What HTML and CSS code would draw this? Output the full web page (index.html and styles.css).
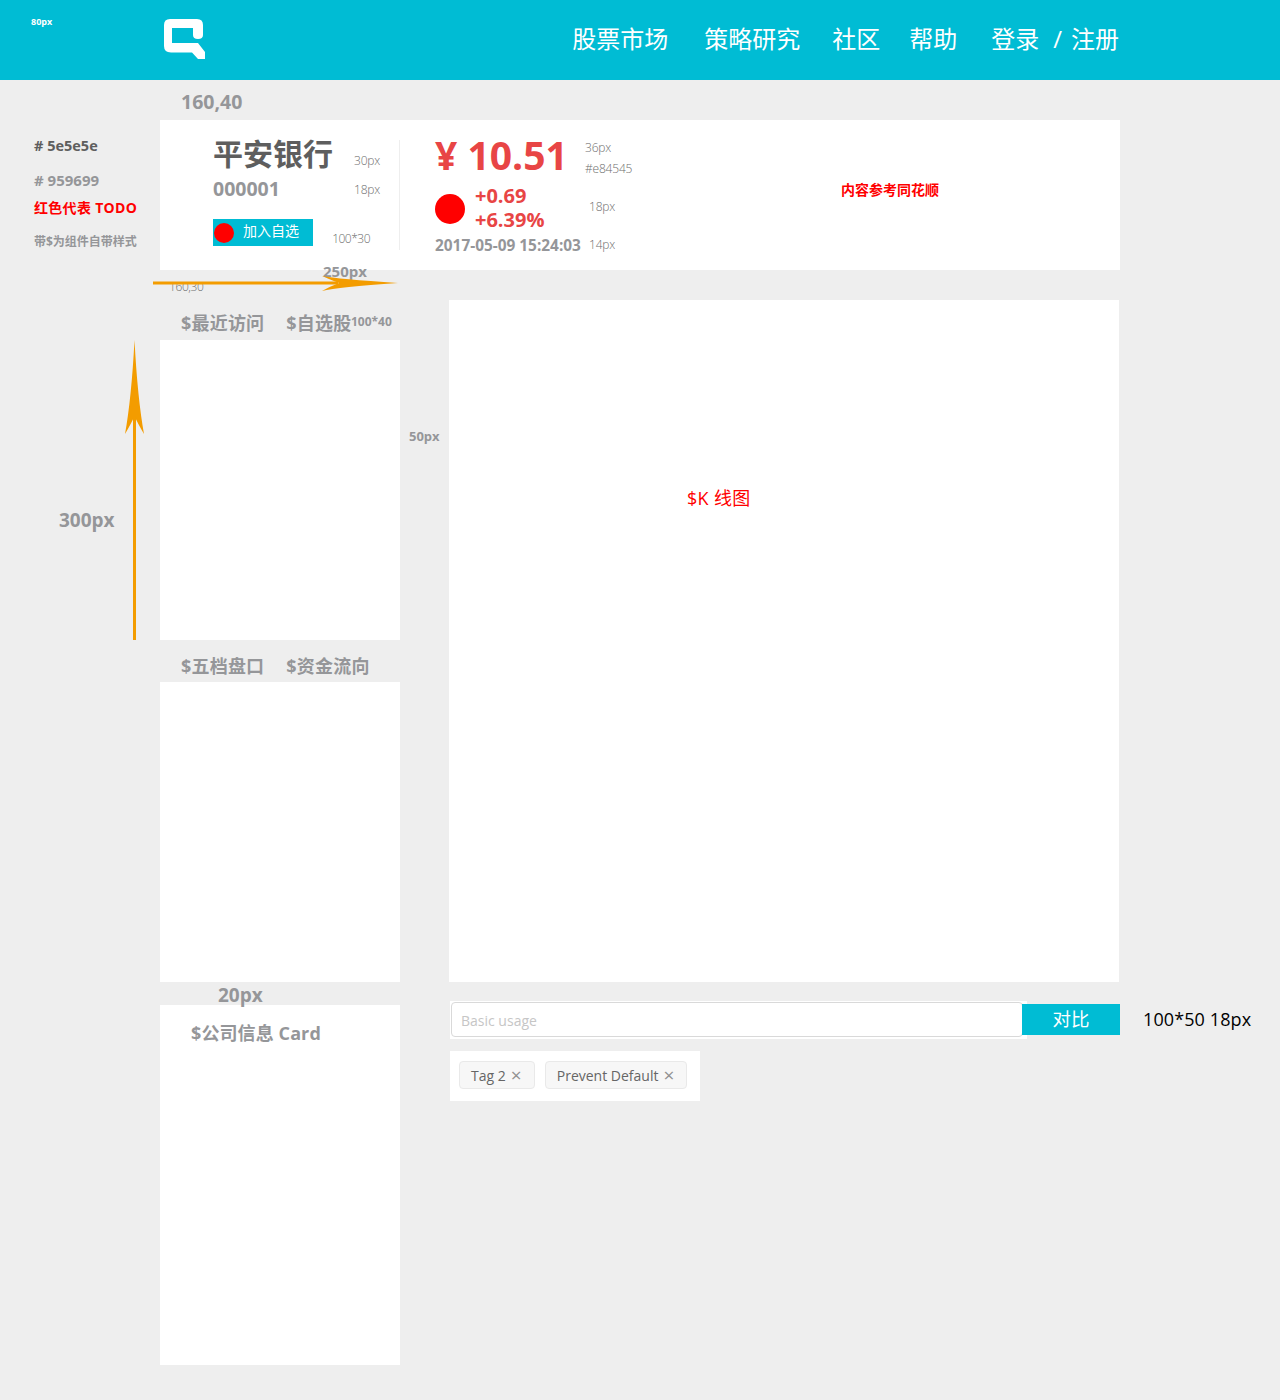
FILE: index.html
```html
<!DOCTYPE html>
<html>
<head lang="zh-CN">
    <meta charset="UTF-8">
    <title>股票市场</title>
    <link rel="stylesheet" href="styles.css">
</head>
<body>
    <div id="page">
        <div id="header">
            <svg id="logo" viewBox="0 0 42 41" width="42" height="41">
                <path d="M6 0 H33 Q39 0 39 6 V16 Q39 20 34 20 Q29 20 29 16 V9 H8 V24 H34 L41 33 V40 H34 L28 33.500 H7 Q0 33.500 0 27 V6 Q0 0 6 0 Z" fill="#fff"/>
            </svg>
            <ul id="nav">
                <li class="nav-market">股票市场</li>
                <li class="nav-research">策略研究</li>
                <li class="nav-community">社区</li>
                <li class="nav-help">帮助</li>
                <li class="nav-login">登录</li>
                <li class="nav-slash">/</li>
                <li class="nav-register">注册</li>
            </ul>
        </div>

        <div id="main">
            <div class="coord">160,40</div>
            <div id="summary">
                <div id="stock">
                    <div class="stock-row stock-title">
                        <h1>平安银行</h1>
                        <span class="hint">30px</span>
                    </div>
                    <div class="stock-row stock-code">
                        <b>000001</b>
                        <span class="hint">18px</span>
                    </div>
                    <div class="stock-row stock-action">
                        <div id="add-btn"><i class="dot-small"></i><span>加入自选</span></div>
                        <span class="hint">100*30</span>
                    </div>
                </div>
                <div id="quote">
                    <div class="quote-price">
                        <b>¥ 10.51</b>
                        <div class="hint-stack">
                            <span class="hint">36px</span>
                            <span class="hint">#e84545</span>
                        </div>
                    </div>
                    <div class="quote-change">
                        <i class="dot-big"></i>
                        <div class="change-text">
                            <b>+0.69</b>
                            <b>+6.39%</b>
                        </div>
                        <span class="hint">18px</span>
                    </div>
                    <div class="quote-time">
                        <b>2017-05-09 15:24:03</b>
                        <span class="hint">14px</span>
                    </div>
                </div>
                <div id="summary-todo">内容参考同花顺</div>
            </div>

            <div id="columns">
                <div id="left">
                    <ul class="tabs">
                        <li>$最近访问</li>
                        <li>$自选股</li>
                    </ul>
                    <div class="panel"></div>
                    <ul class="tabs tabs-second">
                        <li>$五档盘口</li>
                        <li>$资金流向</li>
                    </ul>
                    <div class="panel"></div>
                    <div class="gap-label">20px</div>
                    <div id="company">$公司信息 Card</div>
                </div>
                <div id="right">
                    <div id="kline">$K 线图</div>
                    <div id="search">
                        <div class="search-box"><div class="search-input">Basic usage</div></div>
                        <div class="search-btn">对比</div>
                    </div>
                    <div id="tags">
                        <span class="tag">Tag 2<em>×</em></span>
                        <span class="tag">Prevent Default<em>×</em></span>
                    </div>
                </div>
            </div>
        </div>

        <!-- 标注 -->
        <div class="note note-height">80px</div>
        <div class="note note-dark">#&nbsp;5e5e5e</div>
        <div class="note note-gray">#&nbsp;959699</div>
        <div class="note note-todo">红色代表 TODO</div>
        <div class="note note-self">带$为组件自带样式</div>
        <div class="note note-300">300px</div>
        <div class="note note-250">250px</div>
        <div class="note note-16030">160,30</div>
        <div class="note note-10040">100*40</div>
        <div class="note note-50">50px</div>
        <div class="note note-btn">100*50 18px</div>
        <svg class="arrow arrow-h" width="250" height="20" viewBox="0 0 250 20">
            <rect x="0" y="8.500" width="185" height="3" fill="#f39c00"/>
            <path d="M169 3 Q185 6 245 10 Q185 14 169 18 Q178 13 186 10 Q178 7 169 3 Z" fill="#f39c00"/>
        </svg>
        <svg class="arrow arrow-v" width="24" height="302" viewBox="0 0 24 302">
            <rect x="9" y="70" width="3" height="232" fill="#f39c00"/>
            <path d="M10.500 2 Q7.500 60 1 96 Q7.500 85 10.500 78 Q13.500 85 20 96 Q13.500 60 10.500 2 Z" fill="#f39c00"/>
        </svg>
    </div>
</body>
</html>
```

FILE: styles.css
```css
*{
    margin: 0;
    padding: 0;
    box-sizing: border-box;
}
ul{
    list-style: none;
}
body{
    background: #eee;
    font-family: "Open Sans", "Noto Sans CJK SC", sans-serif;
    color: #959699;
}
#page{
    position: relative;
    width: 1280px;
    height: 1400px;
    overflow: hidden;
}
#header{
    height: 80px;
    background: #00bcd4;
    padding: 0 161px 0 164px;
    display: flex;
    align-items: center;
    justify-content: space-between;
}
#logo{
    display: block;
    margin-bottom: 1px;
}
#nav{
    display: flex;
    color: #fff;
    font-size: 24px;
    font-family: "Noto Sans CJK SC", sans-serif;
    margin-bottom: 6px;
}
.nav-research{ margin-left: 36px; }
.nav-community{ margin-left: 32px; }
.nav-help{ margin-left: 29px; }
.nav-login{ margin-left: 34px; }
.nav-slash{ margin-left: 14px; margin-top: 2px; font-family: "Open Sans", sans-serif; }
.nav-register{ margin-left: 9px; }

#main{
    padding-left: 160px;
    width: 1120px;
}
.coord{
    height: 40px;
    padding-left: 21px;
    font-size: 19.500px;
    font-weight: 700;
    line-height: 44px;
}

#summary{
    position: relative;
    height: 150px;
    background: #fff;
    display: flex;
    padding-top: 20px;
}
#stock{
    width: 240px;
    height: 110px;
    padding-left: 53px;
    padding-right: 19px;
    border-right: 1px solid #eee;
}
.stock-row{
    display: flex;
    justify-content: space-between;
}
.stock-title{
    height: 28px;
    align-items: flex-end;
}
.stock-title h1{
    font-size: 30px;
    line-height: 28px;
    color: #5e5e5e;
    font-weight: 700;
}
.stock-title .hint{
    margin-bottom: -1px;
}
.stock-code{
    margin-top: 7px;
    height: 26px;
    align-items: center;
}
.stock-code b{
    font-size: 19.500px;
}
.stock-code .hint{
    padding-top: 4px;
}
.stock-action{
    margin-top: 18px;
    align-items: flex-end;
}
.stock-action .hint{
    margin-right: 10px;
    margin-bottom: -1px;
    letter-spacing: -0.5px;
}
.hint{
    font-size: 12px;
    font-weight: 300;
    color: #6e6e6e;
    line-height: 16px;
    letter-spacing: -0.2px;
}
#add-btn{
    width: 100px;
    height: 27px;
    background: #00bcd4;
    color: #fff;
    font-size: 14px;
    font-family: "Noto Sans CJK SC", sans-serif;
    display: flex;
    align-items: center;
    padding-left: 1px;
}
#add-btn span{
    margin-left: 9px;
    margin-top: -5px;
}
.dot-small{
    width: 20px;
    height: 20px;
    border-radius: 50%;
    background: #f00;
}
#quote{
    margin-left: 35px;
    color: #e84545;
}
.quote-price{
    display: flex;
    height: 40px;
}
.quote-price b{
    font-size: 39px;
    line-height: 30px;
    width: 150px;
}
.hint-stack{
    display: flex;
    flex-direction: column;
    gap: 5px;
}
.quote-change{
    display: flex;
    align-items: center;
    margin-top: 2px;
    height: 54px;
}
.quote-change .hint{
    margin-bottom: 4px;
}
.dot-big{
    width: 30px;
    height: 30px;
    border-radius: 50%;
    background: #f00;
}
.change-text{
    margin-left: 10px;
    margin-bottom: 2px;
    width: 114px;
    display: flex;
    flex-direction: column;
    font-size: 20px;
    line-height: 24px;
}
.quote-time{
    display: flex;
    align-items: center;
    color: #959699;
    font-size: 15.400px;
    margin-top: -1px;
}
.quote-time b{
    width: 154px;
    white-space: nowrap;
}
.quote-time .hint{
    margin-bottom: 2px;
}
#summary-todo{
    position: absolute;
    left: 681px;
    top: 60px;
    color: #f00;
    font-size: 14px;
    font-weight: 700;
    line-height: 20px;
}

#columns{
    display: flex;
    margin-top: 30px;
}
#left{
    width: 240px;
}
#right{
    margin-left: 49px;
    width: 671px;
}
.tabs{
    display: flex;
    height: 40px;
    padding-left: 21px;
    gap: 22px;
    font-size: 18px;
    font-weight: 700;
    line-height: 46px;
    letter-spacing: 0.2px;
}
.tabs-second{
    height: 42px;
    line-height: 52px;
}
.panel{
    height: 300px;
    background: #fff;
}
.gap-label{
    height: 23px;
    padding-left: 58px;
    font-size: 19px;
    font-weight: 700;
    line-height: 26px;
}
#company{
    height: 360px;
    background: #fff;
    padding: 15px 0 0 31px;
    font-size: 18px;
    font-weight: 700;
    line-height: 26px;
    letter-spacing: 0.1px;
}
#kline{
    width: 670px;
    height: 682px;
    background: #fff;
    padding: 186px 0 0 238px;
    color: #f00;
    font-size: 18px;
    line-height: 24px;
    letter-spacing: 0.3px;
}
#search{
    display: flex;
    align-items: center;
    margin-top: 19px;
    width: 671px;
    height: 38px;
}
.search-box{
    width: 577px;
    height: 38px;
    margin-left: 1px;
    margin-right: -5px;
    background: #fff;
    padding: 1px;
}
.search-input{
    width: 572px;
    height: 35px;
    border: 1px solid #d9d9d9;
    border-radius: 4px;
    padding-left: 9px;
    font-size: 14px;
    line-height: 36px;
    color: #c6c6c6;
}
.search-btn{
    width: 98px;
    height: 31px;
    margin-bottom: 1px;
    background: #00bcd4;
    color: #fff;
    text-align: center;
    font-size: 18.500px;
    font-family: "Noto Sans CJK SC", sans-serif;
    line-height: 28px;
    position: relative;
}
#tags{
    display: flex;
    gap: 10px;
    width: 250px;
    height: 50px;
    margin: 12px 0 0 1px;
    padding: 10px 9px;
    background: #fff;
}
.tag{
    display: flex;
    align-items: center;
    flex-shrink: 0;
    white-space: nowrap;
    height: 28px;
    padding: 0 12px 0 11px;
    border: 1px solid #e9e9e9;
    border-radius: 4px;
    background: #f7f7f7;
    font-size: 14px;
    color: #666;
}
.tag em{
    font-style: normal;
    color: #919191;
    font-size: 19px;
    line-height: 20px;
    width: 11px;
    margin-left: 5px;
    text-align: center;
}

.note{
    position: absolute;
    white-space: nowrap;
    font-weight: 700;
}
.note-height{
    left: 31px;
    top: 15px;
    color: #fff;
    font-size: 9px;
    line-height: 14px;
}
.note-dark{
    left: 34px;
    top: 136px;
    color: #5e5e5e;
    font-size: 14.500px;
    line-height: 20px;
}
.note-gray{
    left: 34px;
    top: 170px;
    font-size: 15px;
    line-height: 20px;
}
.note-todo{
    left: 34px;
    top: 198px;
    color: #f00;
    font-size: 14px;
    line-height: 20px;
    letter-spacing: 0.3px;
}
.note-self{
    left: 34px;
    top: 233px;
    font-size: 12px;
    line-height: 18px;
}
.note-300{
    left: 59px;
    top: 507px;
    font-size: 19px;
    line-height: 26px;
}
.note-250{
    left: 323px;
    top: 261px;
    font-size: 15px;
    line-height: 20px;
}
.note-16030{
    left: 169px;
    top: 279px;
    font-size: 12px;
    font-weight: 300;
    color: #6e6e6e;
    line-height: 16px;
    letter-spacing: -0.4px;
}
.note-10040{
    left: 351px;
    top: 313px;
    font-size: 12px;
    line-height: 18px;
}
.note-50{
    left: 409px;
    top: 427px;
    font-size: 13px;
    line-height: 18px;
}
.note-btn{
    left: 1143px;
    top: 1006px;
    color: #000;
    font-size: 18px;
    font-weight: 400;
    line-height: 26px;
    letter-spacing: 0.1px;
}
.arrow{
    position: absolute;
}
.arrow-h{
    left: 153px;
    top: 273px;
}
.arrow-v{
    left: 124px;
    top: 338px;
}
```
